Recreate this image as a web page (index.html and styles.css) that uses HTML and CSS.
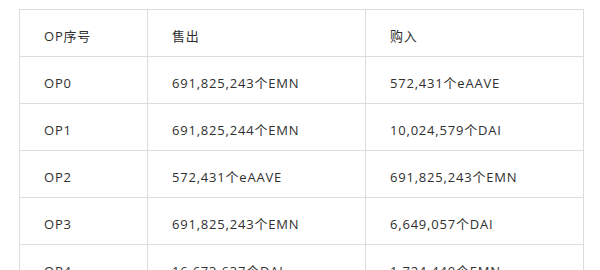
FILE: index.html
```html
<!DOCTYPE html>
<html lang="zh-CN">
<head>
    <meta charset="UTF-8">
    <meta name="viewport" content="width=device-width, initial-scale=1.0">
    <title>OP列表</title>
    <link rel="stylesheet" href="styles.css">
</head>
<body>
    <div class="table-wrap">
        <table class="op-table">
            <colgroup>
                <col class="col-op">
                <col class="col-sell">
                <col class="col-buy">
            </colgroup>
            <thead>
                <tr>
                    <th>OP序号</th>
                    <th>售出</th>
                    <th>购入</th>
                </tr>
            </thead>
            <tbody>
                <tr>
                    <td>OP0</td>
                    <td>691,825,243个EMN</td>
                    <td>572,431个eAAVE</td>
                </tr>
                <tr>
                    <td>OP1</td>
                    <td>691,825,244个EMN</td>
                    <td>10,024,579个DAI</td>
                </tr>
                <tr>
                    <td>OP2</td>
                    <td>572,431个eAAVE</td>
                    <td>691,825,243个EMN</td>
                </tr>
                <tr>
                    <td>OP3</td>
                    <td>691,825,243个EMN</td>
                    <td>6,649,057个DAI</td>
                </tr>
                <tr>
                    <td>OP4</td>
                    <td>16,673,637个DAI</td>
                    <td>1,724,440个EMN</td>
                </tr>
            </tbody>
        </table>
    </div>
</body>
</html>
```

FILE: styles.css
```css
body {
    margin: 0;
    background-color: #fff;
    font-family: "Open Sans", "Noto Sans CJK SC", sans-serif;
    color: #2f2f2f;
}

.table-wrap {
    padding: 9px 17px 0 19px;
}

.op-table {
    width: 564px;
    border-collapse: collapse;
    table-layout: fixed;
    font-size: 13px;
}

.col-op {
    width: 128px;
}

.col-sell,
.col-buy {
    width: 218px;
}

.op-table th,
.op-table td {
    height: 47px;
    padding: 5px 0 0 24px;
    border: 1px solid #ddd;
    text-align: left;
    font-weight: normal;
    letter-spacing: 0.8px;
    box-sizing: border-box;
}
```
